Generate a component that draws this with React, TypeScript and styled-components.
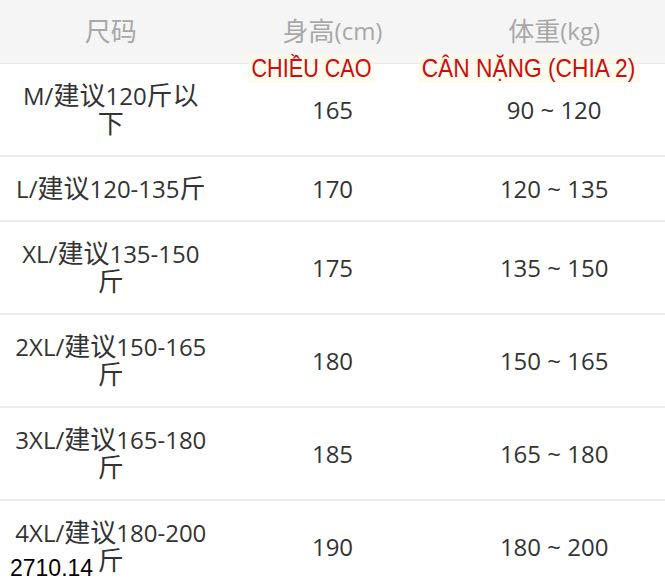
import React from "react";
import styled, { createGlobalStyle } from "styled-components";

const GlobalStyle = createGlobalStyle`
  html, body {
    margin: 0;
    padding: 0;
    background: #ffffff;
  }
  body {
    font-family: "Open Sans", "Noto Sans CJK SC", sans-serif;
  }
`;

const Page = styled.div`
  position: relative;
  width: 665px;
  height: 588px;
  overflow: hidden;
  background: #ffffff;
`;

const Table = styled.div`
  display: grid;
  grid-template-columns: repeat(3, 1fr);
`;

const HeadCell = styled.div`
  height: 64px;
  padding-bottom: 3px;
  display: flex;
  align-items: center;
  justify-content: center;
  background: #f5f5f5;
  border-bottom: 1px solid #e6e6e6;
  box-sizing: border-box;
  font-size: 24px;
  color: #a8a8a8;
`;

const Cell = styled.div`
  display: flex;
  align-items: center;
  justify-content: center;
  padding: 18px 6px 17px;
  border-bottom: 2px solid #ededed;
  font-size: 24px;
  line-height: 28px;
  color: #333333;
  text-align: center;
`;

const Line = styled.span`
  display: block;
  white-space: nowrap;
`;

// Chinese glyphs sit a little larger than the Latin digits in the source
const Han = styled.span`
  font-family: "Noto Sans CJK SC", sans-serif;
  font-size: 26px;
  line-height: 20px;
`;

const Note = styled.span<{ $left: number; $top: number; $squeeze: number }>`
  position: absolute;
  left: ${(p) => p.$left}px;
  top: ${(p) => p.$top}px;
  padding: 2px 4px;
  font-family: "Liberation Sans", Arial, sans-serif;
  font-size: 25px;
  line-height: 1;
  color: #cf0d0d;
  background: rgba(255, 250, 226, 0.55);
  white-space: nowrap;
  transform: scaleX(${(p) => p.$squeeze});
  transform-origin: left center;
`;

const Stamp = styled.span`
  position: absolute;
  left: 10px;
  top: 557px;
  font-family: "Liberation Sans", Arial, sans-serif;
  font-size: 23px;
  line-height: 1;
  color: #000000;
`;

const Mixed = ({ text }: { text: string }) => (
  <>
    {text.split(/([\u4e00-\u9fff]+)/).map((part, i) =>
      /[\u4e00-\u9fff]/.test(part) ? <Han key={i}>{part}</Han> : part
    )}
  </>
);

const rows: { size: string[]; height: string; weight: string }[] = [
  { size: ["M/建议120斤以", "下"], height: "165", weight: "90 ~ 120" },
  { size: ["L/建议120-135斤"], height: "170", weight: "120 ~ 135" },
  { size: ["XL/建议135-150", "斤"], height: "175", weight: "135 ~ 150" },
  { size: ["2XL/建议150-165", "斤"], height: "180", weight: "150 ~ 165" },
  { size: ["3XL/建议165-180", "斤"], height: "185", weight: "165 ~ 180" },
  { size: ["4XL/建议180-200", "斤"], height: "190", weight: "180 ~ 200" },
];

export default function App() {
  return (
    <>
      <GlobalStyle />
      <Page>
        <Table>
          <HeadCell>
            <Mixed text="尺码" />
          </HeadCell>
          <HeadCell>
            <Mixed text="身高(cm)" />
          </HeadCell>
          <HeadCell>
            <Mixed text="体重(kg)" />
          </HeadCell>
          {rows.map((r) => (
            <React.Fragment key={r.height}>
              <Cell>
                <div>
                  {r.size.map((l) => (
                    <Line key={l}>
                      <Mixed text={l} />
                    </Line>
                  ))}
                </div>
              </Cell>
              <Cell>{r.height}</Cell>
              <Cell>{r.weight}</Cell>
            </React.Fragment>
          ))}
        </Table>
        <Note $left={248} $top={54} $squeeze={0.865}>
          CHIỀU CAO
        </Note>
        <Note $left={418} $top={54} $squeeze={0.91}>
          CÂN NẶNG (CHIA 2)
        </Note>
        <Stamp>2710.14</Stamp>
      </Page>
    </>
  );
}
